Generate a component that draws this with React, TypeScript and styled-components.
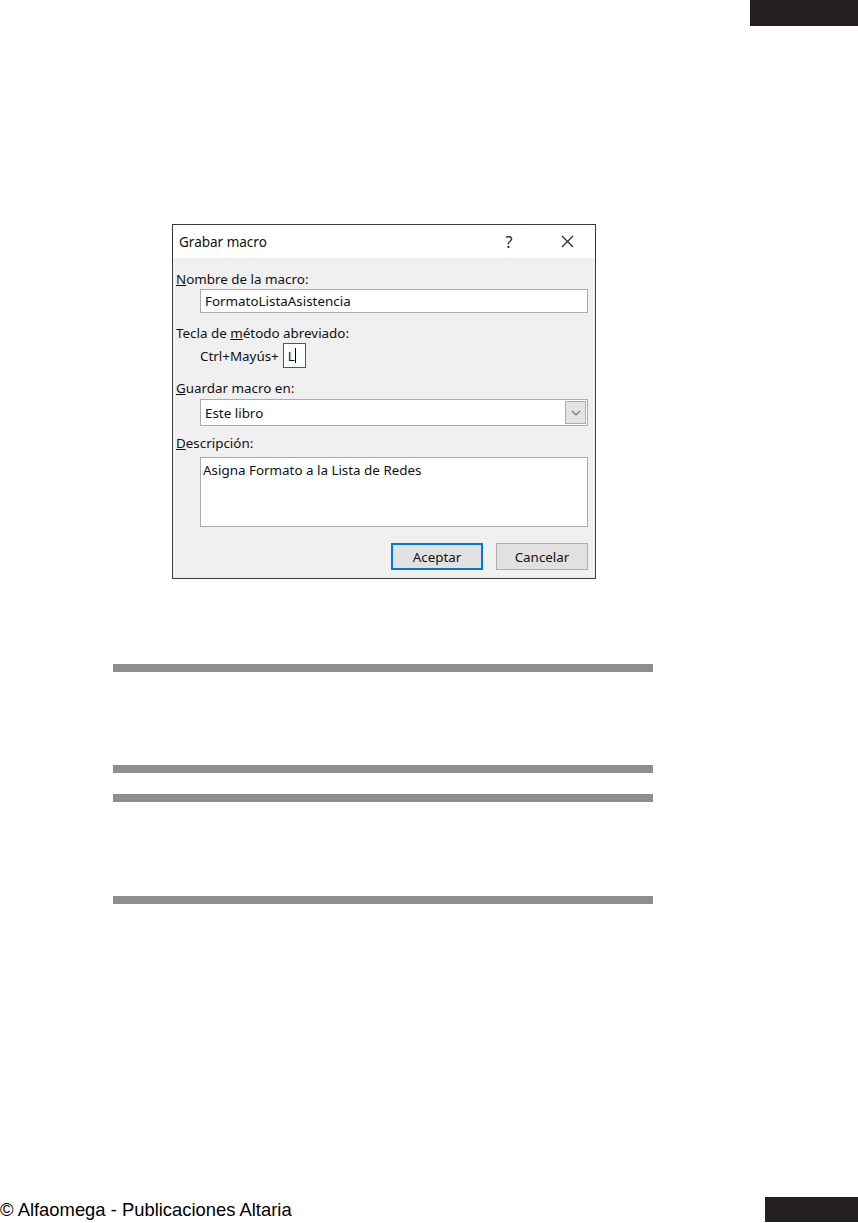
import React from 'react'
import styled, { createGlobalStyle } from 'styled-components'

const GlobalStyle = createGlobalStyle`
  html, body {
    margin: 0;
    padding: 0;
    background: #ffffff;
  }
  * {
    box-sizing: border-box;
  }
`

const colors = {
  ink: '#231f20',
  rule: '#8e8e8e',
  dialogBody: '#f0f0f0',
  field: '#ababab',
  button: '#e1e1e1',
  focus: '#0078d7',
}

const Page = styled.div`
  width: 858px;
  height: 1223px;
  display: flex;
  flex-direction: column;
  overflow: hidden;
`

const Header = styled.div`
  display: flex;
  justify-content: flex-end;
`

const Tab = styled.div<{ w: number; h: number }>`
  width: ${({ w }) => w}px;
  height: ${({ h }) => h}px;
  background: ${colors.ink};
`

const Dialog = styled.div`
  margin: 198px 0 0 172px;
  width: 424px;
  border: 1px solid #3a3a3a;
  font-family: 'Noto Sans', 'DejaVu Sans', sans-serif;
  font-size: 13.4px;
  color: #111;
`

const TitleBar = styled.div`
  height: 33px;
  background: #ffffff;
  display: flex;
  align-items: center;
  padding: 0 0 0 6px;
`

const Title = styled.span`
  flex: 1;
  font-size: 13.5px;
`

const TitleButton = styled.span<{ w: number }>`
  width: ${({ w }) => w}px;
  display: flex;
  justify-content: center;
  align-items: center;
  font-size: 16px;
  color: #222;
`

const Body = styled.div`
  background: ${colors.dialogBody};
  padding: 12px 7px 8px 3px;
  display: flex;
  flex-direction: column;
`

const Label = styled.div<{ mt?: number }>`
  line-height: 18px;
  margin-top: ${({ mt }) => mt || 0}px;
`

const Field = styled.div<{ mt?: number; h: number }>`
  margin: ${({ mt }) => mt || 0}px 0 0 24px;
  height: ${({ h }) => h}px;
  background: #fff;
  border: 1px solid ${colors.field};
  display: flex;
  align-items: center;
  padding-left: 4px;
`

const SelectField = styled(Field)`
  padding-right: 1px;
  justify-content: space-between;
`

const DropButton = styled.div`
  width: 21px;
  height: 23px;
  background: #e3e3e3;
  border: 1px solid #adadad;
  display: flex;
  align-items: center;
  justify-content: center;
`

const TextArea = styled(Field)`
  align-items: flex-start;
  padding: 3px 0 0 2px;
`

const ShortcutRow = styled.div`
  margin: 1px 0 0 24px;
  display: flex;
  align-items: center;
  gap: 4px;
`

const KeyBox = styled.div`
  width: 23px;
  height: 25px;
  background: #fff;
  border: 1px solid #555;
  display: flex;
  align-items: center;
  padding-left: 4px;
`

const Caret = styled.span`
  display: inline-block;
  width: 1px;
  height: 15px;
  background: #000;
`

const Buttons = styled.div`
  margin-top: 16px;
  display: flex;
  justify-content: flex-end;
  gap: 13px;
`

const Button = styled.div<{ primary?: boolean }>`
  width: 92px;
  height: 27px;
  background: ${colors.button};
  border: ${({ primary }) => primary ? `2px solid ${colors.focus}` : '1px solid #adadad'};
  display: flex;
  align-items: center;
  justify-content: center;
`

const Rules = styled.div`
  margin: 85px 0 0 113px;
  width: 540px;
  display: flex;
  flex-direction: column;
  gap: 21px;
`

const RuleBox = styled.div<{ h: number }>`
  height: ${({ h }) => h}px;
  border-top: 8px solid ${colors.rule};
  border-bottom: 8px solid ${colors.rule};
`

const Footer = styled.div`
  margin-top: auto;
  display: flex;
  justify-content: space-between;
  align-items: flex-end;
  padding-bottom: 1px;
`

const Credit = styled.span`
  font-family: 'Liberation Sans', Arial, sans-serif;
  font-size: 18.4px;
  line-height: 20px;
  color: #000;
  margin-bottom: 2px;
`

const CloseIcon = () => (
  <svg width="13" height="13" viewBox="0 0 13 13">
    <path d="M1 1 L12 12 M12 1 L1 12" stroke="#222" strokeWidth="1.1" fill="none" />
  </svg>
)

const Chevron = () => (
  <svg width="10" height="6" viewBox="0 0 10 6">
    <path d="M1 1 L5 5 L9 1" stroke="#707070" strokeWidth="1.2" fill="none" />
  </svg>
)

const App: React.FC = () => (
  <Page>
    <GlobalStyle />
    <Header>
      <Tab w={108} h={26} />
    </Header>

    <Dialog>
      <TitleBar>
        <Title>Grabar macro</Title>
        <TitleButton w={60}>?</TitleButton>
        <TitleButton w={56}><CloseIcon /></TitleButton>
      </TitleBar>
      <Body>
        <Label><u>N</u>ombre de la macro:</Label>
        <Field mt={1} h={24}>FormatoListaAsistencia</Field>

        <Label mt={11}>Tecla de <u>m</u>étodo abreviado:</Label>
        <ShortcutRow>
          <span>Ctrl+Mayús+</span>
          <KeyBox>L<Caret /></KeyBox>
        </ShortcutRow>

        <Label mt={11}><u>G</u>uardar macro en:</Label>
        <SelectField mt={2} h={27}>
          <span>Este libro</span>
          <DropButton><Chevron /></DropButton>
        </SelectField>

        <Label mt={8}><u>D</u>escripción:</Label>
        <TextArea mt={5} h={70}>Asigna Formato a la Lista de Redes</TextArea>

        <Buttons>
          <Button primary>Aceptar</Button>
          <Button>Cancelar</Button>
        </Buttons>
      </Body>
    </Dialog>

    <Rules>
      <RuleBox h={109} />
      <RuleBox h={110} />
    </Rules>

    <Footer>
      <Credit>© Alfaomega - Publicaciones Altaria</Credit>
      <Tab w={93} h={25} />
    </Footer>
  </Page>
)

export default App
